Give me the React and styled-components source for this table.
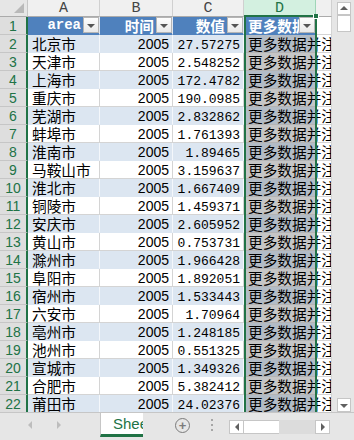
import React from 'react'
import styled, { createGlobalStyle } from 'styled-components'

const GREEN = '#217346'
const CN = `"Noto Sans CJK SC", "Liberation Sans", sans-serif`

const GlobalStyle = createGlobalStyle`
    html, body {
        margin: 0;
        padding: 0;
        background: #fff;
        overflow: hidden;
    }
`

/* window */
const Window = styled.div`
    width: 354px;
    height: 440px;
    display: flex;
    flex-direction: column;
    background: #e6e6e6;
    overflow: hidden;
`

const Main = styled.div`
    display: flex;
    height: 412px;
`

const Sheet = styled.div`
    position: relative;
    width: 332px;
    height: 412px;
    overflow: hidden;
    background: #fff;
`

const Row = styled.div`
    display: flex;
    height: ${(p) => p.$h}px;
`

/* headers */
const Corner = styled.div`
    width: 28px;
    box-sizing: border-box;
    border-right: 1px solid #c6c6c6;
    border-bottom: 1px solid #ababab;
    background: #e6e6e6;
    display: flex;
    align-items: flex-end;
    justify-content: flex-end;
    padding: 0 3px 3px 0;
`

const CornerMark = styled.span`
    width: 10px;
    height: 10px;
    background: #b9b9b9;
    clip-path: polygon(100% 0, 100% 100%, 0 100%);
`

const ColHead = styled.div`
    width: ${(p) => p.$w}px;
    flex: none;
    box-sizing: border-box;
    border-right: 1px solid ${(p) => (p.$sel ? '#9fd5b7' : '#d0d0d0')};
    border-bottom: 1px solid #ababab;
    background: ${(p) => (p.$sel ? '#d3f0e0' : '#f0f0f0')};
    color: ${(p) => (p.$sel ? GREEN : '#444')};
    font: 15px 'Liberation Mono', monospace;
    display: flex;
    align-items: center;
    justify-content: center;
`

const RowHead = styled.div`
    width: 28px;
    flex: none;
    box-sizing: border-box;
    border-right: 2px solid ${GREEN};
    border-bottom: 1px solid #c6c6c6;
    background: #dedede;
    color: ${GREEN};
    font: 14px 'Liberation Sans', Arial, sans-serif;
    display: flex;
    align-items: center;
    justify-content: center;
`

/* table header row with filter buttons */
const HeadCell = styled.div`
    width: ${(p) => p.$w}px;
    flex: none;
    box-sizing: border-box;
    display: flex;
    align-items: flex-start;
    background: #4f81bd;
    border-right: 1px solid #e0e7f1;
    border-bottom: 1px solid #4f81bd;
    padding-left: 4px;
    overflow: hidden;
`

const HeadLabel = styled.span`
    flex: 1;
    min-width: 0;
    overflow: hidden;
    white-space: nowrap;
    text-align: ${(p) => (p.$left ? 'left' : 'right')};
    padding-right: ${(p) => (p.$left ? 0 : 2)}px;
    color: #fff;
    font-weight: bold;
    line-height: 17px;
    font-family: ${(p) => (p.$mono ? `'Liberation Mono', monospace` : CN)};
    font-size: ${(p) => (p.$mono ? 14 : 14.67)}px;
`

const FilterBtn = styled.span`
    width: 16px;
    height: 16px;
    flex: none;
    box-sizing: border-box;
    border: 1px solid #b5b5b5;
    background: linear-gradient(#fdfdfd, #e9e9e9);
    display: flex;
    align-items: center;
    justify-content: center;

    &::after {
        content: '';
        border-left: 4px solid transparent;
        border-right: 4px solid transparent;
        border-top: 4px solid #555;
        margin-top: 1px;
    }
`

/* data cells */
const cellBg = (p) => {
    if (p.$blank) return 'transparent'
    if (p.$sel) return p.$band ? '#b3bcc6' : '#c6c6c6'
    return p.$band ? '#dce6f1' : '#fff'
}

const Cell = styled.div`
    width: ${(p) => p.$w}px;
    flex: none;
    box-sizing: border-box;
    background: ${cellBg};
    border-right: 1px solid ${(p) => (p.$band && !p.$sel ? '#f4f7fb' : '#d4d4d4')};
    border-bottom: 1px solid ${(p) => (p.$sel ? '#b4b4b4' : p.$band ? '#dce6f1' : '#d4d4d4')};
    padding: 0 ${(p) => (p.$right ? 3 : 0)}px 0 ${(p) => (p.$right ? 0 : 4)}px;
    text-align: ${(p) => (p.$right ? 'right' : 'left')};
    white-space: nowrap;
    overflow: ${(p) => (p.$spill ? 'visible' : 'hidden')};
    line-height: 17px;
    color: #000;
`

const CnText = styled.span`
    font-family: ${CN};
    font-size: 14.67px;
`

const Year = styled.span`
    font: 14px 'Liberation Sans', Arial, sans-serif;
`

const Num = styled.span`
    font: 13px 'Liberation Mono', monospace;
`

/* selection overlay on column D */
const Selection = styled.div`
    position: absolute;
    left: 244px;
    top: 15px;
    width: 73px;
    bottom: 0;
    box-sizing: border-box;
    border: 2px solid ${GREEN};
    border-bottom: none;
    pointer-events: none;
`

const Handle = styled.span`
    position: absolute;
    right: -4px;
    top: -3px;
    width: 4px;
    height: 4px;
    background: ${GREEN};
    border: 1px solid #fff;
    border-top: none;
`

/* scrollbars */
const VScroll = styled.div`
    width: 22px;
    display: flex;
    flex-direction: column;
    padding: 2px 3px 0 5px;
    box-sizing: border-box;
    background: #e6e6e6;
`

const ScrollBtn = styled.div`
    width: ${(p) => p.$w}px;
    height: ${(p) => p.$h}px;
    flex: none;
    box-sizing: border-box;
    border: 1px solid #c6c6c6;
    background: #fff;
    display: flex;
    align-items: center;
    justify-content: center;
`

const Arrow = styled.span`
    width: 0;
    height: 0;
    border: 4px solid transparent;
    ${(p) => p.$dir === 'up' && `border-bottom: 4px solid ${p.$c}; border-top-width: 0; margin-top: -1px;`}
    ${(p) => p.$dir === 'down' && `border-top: 4px solid ${p.$c}; border-bottom-width: 0; margin-top: 1px;`}
    ${(p) => p.$dir === 'left' && `border-right: 4px solid ${p.$c}; border-left-width: 0;`}
    ${(p) => p.$dir === 'right' && `border-left: 4px solid ${p.$c}; border-right-width: 0;`}
`

const Spacer = styled.div`
    flex: 1;
`

/* sheet tabs */
const TabBar = styled.div`
    height: 28px;
    box-sizing: border-box;
    border-top: 1px solid #c6c6c6;
    display: flex;
    align-items: flex-start;
    background: #e6e6e6;
`

const NavArrows = styled.div`
    width: 100px;
    height: 24px;
    display: flex;
    align-items: center;
    gap: 25px;
    padding-left: 28px;
    box-sizing: border-box;
`

const Tab = styled.div`
    width: 43px;
    height: 24px;
    box-sizing: border-box;
    background: #fff;
    border-left: 1px solid #c6c6c6;
    border-bottom: 3px solid ${GREEN};
    overflow: hidden;
    white-space: nowrap;
    padding-left: 12px;
    color: ${GREEN};
    font: 15px 'Liberation Sans', Arial, sans-serif;
    line-height: 22px;
`

const AddArea = styled.div`
    width: 60px;
    height: 24px;
    display: flex;
    align-items: center;
    padding-left: 32px;
    box-sizing: border-box;
`

const AddBtn = styled.span`
    width: 15px;
    height: 15px;
    box-sizing: border-box;
    border: 1.5px solid #7b7b7b;
    border-radius: 50%;
    color: #7b7b7b;
    display: flex;
    align-items: center;
    justify-content: center;
    font: bold 13px 'Liberation Sans', Arial, sans-serif;
    line-height: 1;
`

const Dots = styled.div`
    width: 26px;
    height: 24px;
    display: flex;
    flex-direction: column;
    justify-content: center;
    gap: 3px;
    padding-left: 8px;
    box-sizing: border-box;

    span {
        width: 2px;
        height: 2px;
        background: #a6a6a6;
    }
`

const HScroll = styled.div`
    width: 101px;
    height: 14px;
    margin-top: 7px;
    display: flex;
`

const HThumb = styled.div`
    width: 35px;
    flex: none;
    background: #fff;
    border-top: 1px solid #c6c6c6;
    border-bottom: 1px solid #c6c6c6;
    box-sizing: border-box;
`

const HTrack = styled.div`
    flex: 1;
    background: #dcdcdc;
`

const data = [
    ['北京市', '27.57275'],
    ['天津市', '2.548252'],
    ['上海市', '172.4782'],
    ['重庆市', '190.0985'],
    ['芜湖市', '2.832862'],
    ['蚌埠市', '1.761393'],
    ['淮南市', '1.89465'],
    ['马鞍山市', '3.159637'],
    ['淮北市', '1.667409'],
    ['铜陵市', '1.459371'],
    ['安庆市', '2.605952'],
    ['黄山市', '0.753731'],
    ['滁州市', '1.966428'],
    ['阜阳市', '1.892051'],
    ['宿州市', '1.533443'],
    ['六安市', '1.70964'],
    ['亳州市', '1.248185'],
    ['池州市', '0.551325'],
    ['宣城市', '1.349326'],
    ['合肥市', '5.382412'],
    ['莆田市', '24.02376'],
]

const cols = [
    { key: 'A', w: 72 },
    { key: 'B', w: 73 },
    { key: 'C', w: 71 },
    { key: 'D', w: 72 },
    { key: '', w: 16 },
]

const NOTE = '更多数据并注释'

export default function App() {
    return (
        <Window>
            <GlobalStyle />
            <Main>
                <Sheet>
                    <Row $h={17}>
                        <Corner>
                            <CornerMark />
                        </Corner>
                        {cols.map((c, i) => (
                            <ColHead key={i} $w={c.w} $sel={c.key === 'D'}>
                                {c.key}
                            </ColHead>
                        ))}
                    </Row>

                    <Row $h={18}>
                        <RowHead>1</RowHead>
                        <HeadCell $w={72}>
                            <HeadLabel $mono>area</HeadLabel>
                            <FilterBtn />
                        </HeadCell>
                        <HeadCell $w={73}>
                            <HeadLabel>时间</HeadLabel>
                            <FilterBtn />
                        </HeadCell>
                        <HeadCell $w={71}>
                            <HeadLabel>数值</HeadLabel>
                            <FilterBtn />
                        </HeadCell>
                        <HeadCell $w={72}>
                            <HeadLabel $left>{NOTE}</HeadLabel>
                            <FilterBtn />
                        </HeadCell>
                        <Cell $w={16} $blank />
                    </Row>

                    {data.map(([city, value], i) => {
                        const n = i + 2
                        const band = n % 2 === 0
                        return (
                            <Row $h={18} key={n}>
                                <RowHead>{n}</RowHead>
                                <Cell $w={72} $band={band}>
                                    <CnText>{city}</CnText>
                                </Cell>
                                <Cell $w={73} $band={band} $right>
                                    <Year>2005</Year>
                                </Cell>
                                <Cell $w={71} $band={band} $right>
                                    <Num>{value}</Num>
                                </Cell>
                                <Cell $w={72} $band={band} $sel $spill>
                                    <CnText>{NOTE}</CnText>
                                </Cell>
                                <Cell $w={16} $blank />
                            </Row>
                        )
                    })}

                    <Selection>
                        <Handle />
                    </Selection>
                </Sheet>

                <VScroll>
                    <ScrollBtn $w={14} $h={13}>
                        <Arrow $dir="up" $c="#606060" />
                    </ScrollBtn>
                    <ScrollBtn $w={14} $h={17} />
                    <Spacer />
                    <ScrollBtn $w={14} $h={14}>
                        <Arrow $dir="down" $c="#606060" />
                    </ScrollBtn>
                </VScroll>
            </Main>

            <TabBar>
                <NavArrows>
                    <Arrow $dir="left" $c="#bdbdbd" />
                    <Arrow $dir="right" $c="#bdbdbd" />
                </NavArrows>
                <Tab>Sheet1</Tab>
                <AddArea>
                    <AddBtn>+</AddBtn>
                </AddArea>
                <Dots>
                    <span />
                    <span />
                    <span />
                </Dots>
                <HScroll>
                    <ScrollBtn $w={15} $h={14}>
                        <Arrow $dir="left" $c="#606060" />
                    </ScrollBtn>
                    <HThumb />
                    <HTrack />
                    <ScrollBtn $w={15} $h={14}>
                        <Arrow $dir="right" $c="#606060" />
                    </ScrollBtn>
                </HScroll>
            </TabBar>
        </Window>
    )
}
